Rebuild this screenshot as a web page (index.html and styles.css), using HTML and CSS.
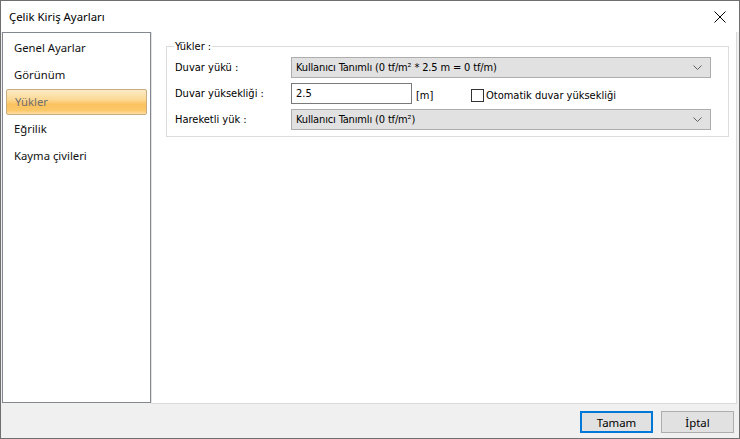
FILE: index.html
```html
<!DOCTYPE html>
<html lang="tr">
<head>
<meta charset="utf-8">
<title>Çelik Kiriş Ayarları</title>
<link rel="stylesheet" href="styles.css">
</head>
<body>
<div class="window">
  <div class="titlebar">
    <span class="title">Çelik Kiriş Ayarları</span>
    <span class="close">
      <svg width="12" height="12" viewBox="0 0 12 12"><path d="M0.5 0.5L11.5 11.5M11.5 0.5L0.5 11.5" stroke="#000" stroke-width="1" fill="none"/></svg>
    </span>
  </div>
  <div class="main">
    <div class="content">
      <ul class="sidebar">
        <li class="item">Genel Ayarlar</li>
        <li class="item">Görünüm</li>
        <li class="item selected">Yükler</li>
        <li class="item">Eğrilik</li>
        <li class="item">Kayma çivileri</li>
      </ul>
      <div class="panel">
        <fieldset class="group">
          <legend class="legend">Yükler :</legend>
          <div class="rows">
            <label class="lbl">Duvar yükü :</label>
            <div class="combo"><span>Kullanıcı Tanımlı (0 tf/m² * 2.5 m = 0 tf/m)</span>
              <svg class="chev" width="9" height="5" viewBox="0 0 9 5"><path d="M0.5 0.5L4.5 4.5L8.5 0.5" stroke="#606060" fill="none"/></svg>
            </div>
            <label class="lbl">Duvar yüksekliği :</label>
            <div class="line">
              <div class="input">2.5</div>
              <span class="unit">[m]</span>
              <span class="check"></span>
              <span class="checklbl">Otomatik duvar yüksekliği</span>
            </div>
            <label class="lbl">Hareketli yük :</label>
            <div class="combo"><span>Kullanıcı Tanımlı (0 tf/m²)</span>
              <svg class="chev" width="9" height="5" viewBox="0 0 9 5"><path d="M0.5 0.5L4.5 4.5L8.5 0.5" stroke="#606060" fill="none"/></svg>
            </div>
          </div>
        </fieldset>
      </div>
    </div>
    <div class="footer">
      <button class="btn default">Tamam</button>
      <button class="btn">İptal</button>
    </div>
  </div>
</div>
</body>
</html>
```

FILE: styles.css
```css
* { box-sizing: border-box; }
html, body { margin: 0; padding: 0; }
body {
  width: 740px;
  height: 439px;
  overflow: hidden;
  font-family: "Noto Sans", "Open Sans", sans-serif;
  font-size: 11px;
  color: #000;
}
.window {
  width: 740px;
  height: 439px;
  border: 1px solid #6f6f6f;
  display: flex;
  flex-direction: column;
  background: #fff;
}
.titlebar {
  height: 31px;
  display: flex;
  align-items: center;
  justify-content: space-between;
  padding: 0 13px 0 8px;
  background: #fff;
}
.title { font-size: 11.4px; color: #000; }
.close { display: flex; }
.main {
  flex: 1;
  display: flex;
  flex-direction: column;
  background: #f0f0f0;
}
.content {
  display: flex;
  height: 372px;
  padding-left: 1px;
  padding-right: 2px;
}
.sidebar {
  list-style: none;
  margin: 0;
  padding: 1px 3px 0 3px;
  width: 149px;
  height: 371px;
  background: #fff;
  border: 1px solid #828790;
}
.item {
  height: 27px;
  line-height: 27px;
  padding-left: 8px;
  color: #111;
  font-size: 11.3px;
}
.item.selected {
  height: 26px;
  margin-top: 1px;
  line-height: 24px;
  color: #707070;
  border: 1px solid #c9ad80;
  border-radius: 2px;
  background: linear-gradient(#fdebc6 0%, #fcd995 40%, #fbc25f 60%, #fbc869 85%, #fde0a8 100%);
}
.panel {
  flex: 1;
  background: #fff;
  border-left: 1px solid #e3e3e3;
  border-right: 1px solid #dadada;
  border-bottom: 1px solid #dadada;
  padding: 8px 7px 0 14px;
}
.group {
  margin: 0;
  border: 1px solid #dcdcdc;
  padding: 0 17px 0 8px;
  height: 97px;
  font-family: "DejaVu Sans Condensed", "DejaVu Sans", sans-serif;
  font-size: 11px;
}
.legend {
  margin-left: -1px;
  padding: 0 1px;
  font-size: 11px;
  color: #000;
}
.rows {
  display: grid;
  grid-template-columns: 116px 1fr;
  grid-auto-rows: 21px;
  row-gap: 5px;
  align-items: center;
  margin-top: 4px;
}
.lbl { padding-left: 0; }
.combo {
  height: 21px;
  background: #e1e1e1;
  border: 1px solid #adadad;
  display: flex;
  align-items: center;
  justify-content: space-between;
  padding: 0 8px 0 4px;
  letter-spacing: -0.15px;
}
.chev { display: block; }
.line {
  display: flex;
  align-items: center;
  height: 21px;
}
.input {
  width: 121px;
  height: 21px;
  border: 1px solid #7a7a7a;
  line-height: 19px;
  padding-left: 4px;
  background: #fff;
}
.unit { margin-left: 4px; width: 55px; padding-top: 4px; }
.check {
  width: 13px;
  height: 13px;
  border: 1px solid #333;
  background: #fff;
  margin-top: 4px;
}
.checklbl {
  margin-left: 2px;
  padding-top: 4px;
  font-size: 11px;
}
.footer {
  flex: 1;
  display: flex;
  justify-content: flex-end;
  align-items: flex-start;
  gap: 8px;
  padding: 7px 5px 0 0;
}
.btn {
  width: 73px;
  height: 22px;
  font-family: "Noto Sans", "Open Sans", sans-serif;
  font-size: 11.4px;
  color: #000;
  background: #e1e1e1;
  border: 1px solid #adadad;
  padding: 0;
}
.btn.default { border: 2px solid #0078d7; }
```
